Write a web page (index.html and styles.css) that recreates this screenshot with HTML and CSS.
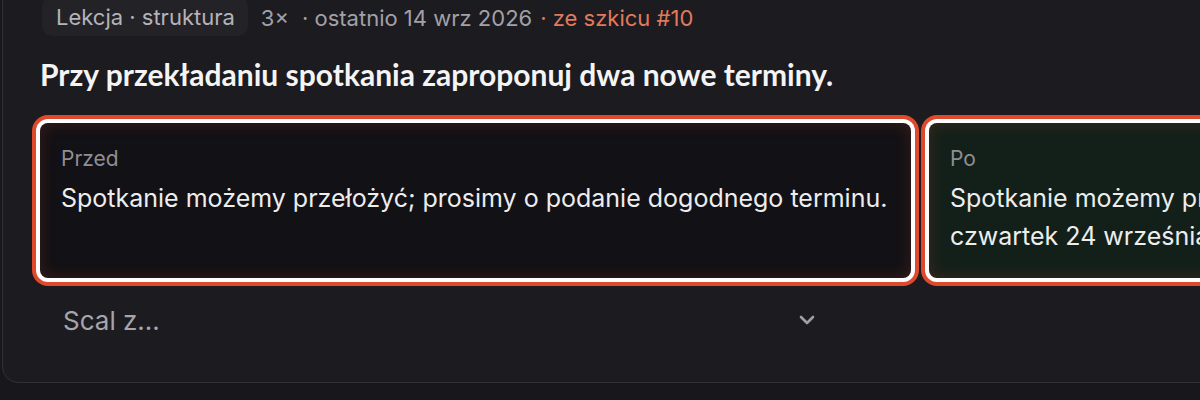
FILE: index.html
```html
<!DOCTYPE html>
<html lang="pl">
<head>
<meta charset="utf-8">
<title>Lekcja</title>
<link rel="stylesheet" href="styles.css">
</head>
<body>
<div class="panel">
  <div class="meta">
    <span class="tag">Lekcja · struktura</span>
    <span class="count">3×</span>
    <span class="date">· ostatnio 14 wrz 2026</span>
    <span class="src">· ze szkicu #10</span>
  </div>
  <h2 class="title">Przy przekładaniu spotkania zaproponuj dwa nowe terminy.</h2>
  <div class="compare">
    <div class="box before">
      <div class="label">Przed</div>
      <div class="text">Spotkanie możemy przełożyć; prosimy o podanie dogodnego terminu.</div>
    </div>
    <div class="box after">
      <div class="label">Po</div>
      <div class="text">Spotkanie możemy przełożyć na wtorek 22 września o 10:00 lub czwartek 24 września o 14:00.</div>
    </div>
  </div>
  <div class="merge">
    <span class="merge-text">Scal z...</span>
    <svg class="chev" width="16" height="16" viewBox="0 0 16 16"><path d="M2 5 L8 11 L14 5" fill="none" stroke="currentColor" stroke-width="2.6" stroke-linecap="round" stroke-linejoin="round"/></svg>
  </div>
</div>
</body>
</html>
```
FILE: styles.css
```css
html, body {
  margin: 0;
  padding: 0;
  background: #18171b;
  overflow: hidden;
  height: 400px;
}
body {
  font-family: Inter, "Noto Sans", sans-serif;
  color: #ececee;
}
.panel {
  margin-top: -30px;
  margin-left: 2px;
  width: 1840px;
  box-sizing: border-box;
  background: #1c1b20;
  border: 1px solid #313036;
  border-radius: 16px;
  padding: 26px 0 40px 37px;
}
.meta {
  display: flex;
  align-items: center;
  font-size: 22px;
  color: #a2a1a7;
  height: 42px;
}
.tag {
  align-self: flex-start;
  background: #232227;
  border-radius: 10px;
  padding: 8px 13px 7px 14px;
  margin-left: 2px;
  color: #b4b3b8;
  line-height: 24px;
}
.count { margin-left: 13px; }
.date { margin-left: 13px; }
.src { margin-left: 8px; color: #e17a5c; }
.title {
  margin: 17px 0 0 0;
  font-family: Lato, "Noto Sans", sans-serif;
  font-weight: 700;
  font-size: 30px;
  line-height: 36px;
  color: #f4f4f5;
}
.compare {
  display: grid;
  grid-template-columns: 871px 871px;
  gap: 18px;
  margin-top: 31px;
}
.box {
  height: 155px;
  box-sizing: border-box;
  border-radius: 8px;
  padding: 22px 20px 0 21px;
  box-shadow: inset 0 0 16px rgba(225, 75, 45, 0.2), 0 0 0 4px #ffffff, 0 0 0 8px #df4a2c;
}
.before { background: #121115; }
.after { background: #13201a; }
.label {
  font-size: 21px;
  line-height: 28px;
  color: #8f8e94;
}
.text {
  margin-top: 6px;
  font-size: 25px;
  line-height: 38px;
  color: #ededee;
}
.merge {
  display: flex;
  align-items: center;
  justify-content: space-between;
  width: 792px;
  box-sizing: border-box;
  margin-top: 20px;
  padding: 0 17px 0 23px;
  height: 44px;
}
.merge-text {
  font-size: 26px;
  color: #a6a5ab;
}
.chev { color: #a09fa5; }
```
